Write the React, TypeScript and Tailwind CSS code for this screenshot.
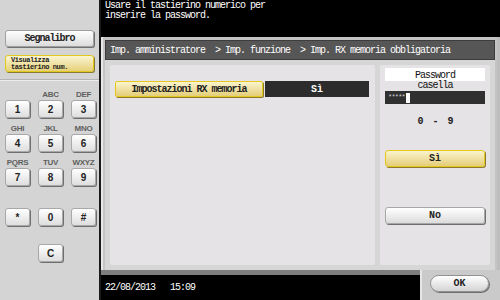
import React from "react";

const mono = "font-['Liberation_Mono','DejaVu_Sans_Mono',monospace]";

function Key({ label, value }: { label?: string; value: string }) {
  return (
    <div className="flex flex-col items-center">
      <div className="h-[10px] text-[8px] leading-[10px] font-bold text-[#606060] font-['Liberation_Sans',sans-serif] tracking-[-0.3px]">
        {label ?? ""}
      </div>
      <KeyButton value={value} />
    </div>
  );
}

function KeyButton({ value }: { value: string }) {
  return (
    <div className="w-[25px] h-[18px] rounded-[3px] border border-[#a8a8a8] bg-gradient-to-b from-[#ffffff] to-[#dedede] shadow-[1px_1px_0_#6e6e6e] flex items-center justify-center text-[10px] font-bold text-[#222] font-['Liberation_Sans',sans-serif]">
      {value}
    </div>
  );
}

export default function App() {
  return (
    <div className={`w-[500px] h-[300px] flex overflow-hidden bg-black ${mono}`}>
      {/* Keypad column */}
      <div className="w-[99px] h-full bg-[#d4d4d4] flex flex-col">
        <div className="px-[5px] pt-[30px]">
          <div className="h-[17px] rounded-[3px] border border-[#a0a0a0] bg-gradient-to-b from-[#ffffff] to-[#dcdcdc] shadow-[1px_1px_0_#707070] flex items-center justify-center text-[10px] tracking-[-1px] font-bold text-[#222]">
            Segnalibro
          </div>
          <div className="mt-[8px] h-[17px] rounded-[3px] border border-[#e0c820] bg-gradient-to-b from-[#fbf5cf] to-[#e6d07a] shadow-[1px_1px_0_#8a7a30] flex flex-col justify-center pl-[5px] text-[7px] leading-[7px] tracking-[-0.4px] font-bold text-[#222]">
            <span>Visualizza</span>
            <span>tastierino num.</span>
          </div>
        </div>
        <div className="mt-[7px] border-t border-[#b4b4b4]" />
        <div className="border-t border-[#ececec]" />
        <div className="pl-[5px] pt-[9px] grid grid-cols-[25px_25px_25px] gap-x-[8px] gap-y-[6px]">
          <Key value="1" />
          <Key label="ABC" value="2" />
          <Key label="DEF" value="3" />
          <Key label="GHI" value="4" />
          <Key label="JKL" value="5" />
          <Key label="MNO" value="6" />
          <Key label="PQRS" value="7" />
          <Key label="TUV" value="8" />
          <Key label="WXYZ" value="9" />
        </div>
        <div className="pl-[5px] pt-[22px] grid grid-cols-[25px_25px_25px] gap-x-[8px]">
          <KeyButton value="*" />
          <KeyButton value="0" />
          <KeyButton value="#" />
        </div>
        <div className="pl-[38px] pt-[18px]">
          <KeyButton value="C" />
        </div>
      </div>
      <div className="w-[2px] h-full bg-[#1a1a1a]" />

      {/* Screen */}
      <div className="flex-1 flex flex-col">
        <div className="h-[37px] pl-[4px] pt-[1px] text-white text-[10px] leading-[10px] tracking-[-1px]">
          <div>Usare il tastierino numerico per</div>
          <div>inserire la password.</div>
        </div>

        <div className="flex-1 bg-[#c4c4c4] border-l-2 border-[#e8e8e8] border-r-[3px] border-r-[#bdbdbd] pl-[2px] pr-[2px] pt-[3px] flex flex-col">
          <div className="h-[20px] bg-[#565656] border border-[#3c3c3c] flex items-center pl-[4px] text-white text-[10px] tracking-[-1px] whitespace-pre">
            Imp. amministratore  &gt; Imp. funzione  &gt; Imp. RX memoria obbligatoria
          </div>
          <div className="flex-1 bg-[#d6d6d6] flex gap-[5px] px-[5px] pt-[5px] pb-[5px]">
            {/* left panel */}
            <div className="w-[265px] bg-[#e5e3e5] rounded-[2px] pt-[16px] pl-[5px]">
              <div className="flex h-[16px]">
                <div className="w-[148px] rounded-[2px] border border-[#e4c820] bg-gradient-to-b from-[#fbf4cc] to-[#e4ce78] shadow-[1px_1px_0_#8a7a30] flex items-center justify-center text-[10px] tracking-[-1px] font-bold text-[#222]">
                  Impostazioni RX memoria
                </div>
                <div className="ml-[2px] w-[104px] bg-[#2c2c2c] flex items-center justify-center text-[10px] font-bold text-white">
                  Sì
                </div>
              </div>
            </div>
            {/* right panel */}
            <div className="flex-1 bg-[#e5e3e5] rounded-[2px] px-[5px] pt-[3px] flex flex-col">
              <div className="h-[23px] flex flex-col items-center text-[10px] leading-[10px] tracking-[-1px] text-[#111]">
                <span className="self-stretch text-center bg-white pt-[3px]">Password</span>
                <span>casella</span>
              </div>
              <div className="h-[13px] bg-[#303030] flex items-center pl-[3px]">
                <span className="text-[7px] text-[#cfcfcf] tracking-[-0.8px] leading-[7px]">*****</span>
                <span className="ml-[1px] w-[4px] h-[10px] bg-white" />
              </div>
              <div className="mt-[10px] text-center text-[10px] font-bold text-[#222] tracking-[-1px] whitespace-pre">
                0  -  9
              </div>
              <div className="mt-[21px] h-[17px] rounded-[3px] border border-[#e4c820] bg-gradient-to-b from-[#fbf4cc] to-[#e4ce78] shadow-[1px_1px_0_#8a7a30] flex items-center justify-center text-[10px] font-bold text-[#222]">
                Sì
              </div>
              <div className="mt-[40px] h-[17px] rounded-[3px] border border-[#a8a8a8] bg-gradient-to-b from-[#ffffff] to-[#dcdcdc] shadow-[1px_1px_0_#6e6e6e] flex items-center justify-center text-[10px] font-bold text-[#222]">
                No
              </div>
            </div>
          </div>
        </div>

        <div className="h-[30px] flex">
          <div className="flex-1 border-t-[5px] border-[#7e7e7e] bg-black pl-[4px] pt-[5px] text-white text-[10px] tracking-[-1px] whitespace-pre">
            22/08/2013   15:09
          </div>
          <div className="w-[80px] bg-[#cacaca] border-l-2 border-[#e6e6e6] pl-[8px] pt-[5px]">
            <div className="w-[59px] h-[17px] rounded-full border border-[#909090] bg-gradient-to-b from-[#ffffff] to-[#d4d4d4] shadow-[1px_1px_0_#6e6e6e] flex items-center justify-center text-[10px] font-bold text-[#222]">
              OK
            </div>
          </div>
        </div>
      </div>
    </div>
  );
}
